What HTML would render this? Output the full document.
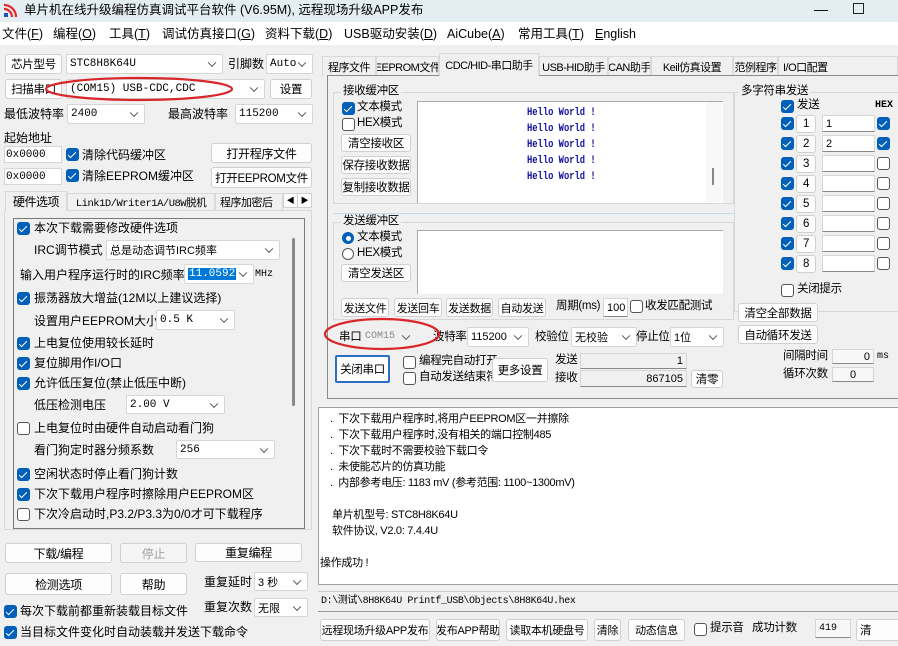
<!DOCTYPE html>
<html><head><meta charset="utf-8"><style>
*{box-sizing:border-box;margin:0;padding:0}
body{width:898px;height:646px;overflow:hidden;background:#f0f0f0;font-family:"Liberation Sans","Noto Sans CJK SC",sans-serif;font-size:12px;color:#000;position:relative}
.a{position:absolute;white-space:nowrap;line-height:1}
.btn{position:absolute;background:#fdfdfd;border:1px solid #d0d0d0;border-radius:3px;text-align:center;white-space:nowrap;display:flex;align-items:center;justify-content:center;font-size:11.5px;letter-spacing:-0.3px;overflow:hidden}
.cmb{position:absolute;background:#fff;border:1px solid #d6d6d6;border-radius:2px;padding-left:3px;display:flex;align-items:center;white-space:nowrap;font-family:"Liberation Mono","Noto Sans CJK SC",monospace;font-size:11px}
.cmb:after{content:"";position:absolute;right:7px;top:50%;width:5px;height:5px;border-right:1px solid #555;border-bottom:1px solid #555;transform:translateY(-70%) rotate(45deg)}
.inp{position:absolute;background:#fff;border:1px solid #d6d6d6;border-bottom:1px solid #888;display:flex;align-items:center;padding:0 3px;font-family:"Liberation Mono",monospace;font-size:11px}
.c{position:absolute;width:13px;height:13px;border-radius:3px;background:#005fb8}
.c:after{content:"";position:absolute;left:4px;top:1.5px;width:3px;height:7px;border-right:1.5px solid #fff;border-bottom:1.5px solid #fff;transform:rotate(45deg)}
.u{position:absolute;width:13px;height:13px;border-radius:3px;background:#fff;border:1px solid #555}
.mono{font-family:"Liberation Mono","Noto Sans CJK SC",monospace}
.white{position:absolute;background:#fff}
.tab{position:absolute;top:56px;height:20px;border:1px solid #d9d9d9;border-bottom:none;background:#f0f0f0;display:flex;align-items:center;justify-content:center;font-size:11px;letter-spacing:-0.5px;white-space:nowrap;overflow:hidden}
.grp{position:absolute;border:1px solid #c8d8e0}
.hw{position:absolute;left:527px;color:#1010a0;font-family:"Liberation Mono",monospace;font-size:11px;font-weight:bold;line-height:1;transform:scaleX(0.8);transform-origin:0 0;white-space:nowrap}
.log{position:absolute;font-size:11px;white-space:nowrap;letter-spacing:-0.3px}
.r{font-size:11.5px;letter-spacing:-0.3px}
.m{position:absolute;top:27px;font-size:12.5px;white-space:nowrap;line-height:15px;height:15px}
</style></head><body>
<div style="position:absolute;left:0;top:0;width:898px;height:22px;background:#e4eef2"></div>
<svg style="position:absolute;left:3px;top:3px" width="16" height="15"><rect x="1" y="10" width="4" height="4" fill="#1f4fbf"/><path d="M1 6a8 8 0 0 1 8 8M1 2a12 12 0 0 1 12 12" stroke="#e0282e" stroke-width="2.2" fill="none"/></svg>
<div class="a" style="left:24px;top:4px;font-size:12.5px">单片机在线升级编程仿真调试平台软件 (V6.95M), 远程现场升级APP发布</div>
<div class="a" style="left:814px;top:2px;font-size:14px">—</div>
<div style="position:absolute;left:853px;top:3px;width:11px;height:11px;border:1px solid #222"></div>
<div style="position:absolute;left:0;top:22px;width:898px;height:23px;background:#fff"></div>
<div class="m" style="left:2px">文件(<u>F</u>)</div>
<div class="m" style="left:53px">编程(<u>O</u>)</div>
<div class="m" style="left:109px">工具(<u>T</u>)</div>
<div class="m" style="left:162px">调试仿真接口(<u>G</u>)</div>
<div class="m" style="left:265px">资料下载(<u>D</u>)</div>
<div class="m" style="left:344px">USB驱动安装(<u>D</u>)</div>
<div class="m" style="left:447px">AiCube(<u>A</u>)</div>
<div class="m" style="left:518px">常用工具(<u>T</u>)</div>
<div class="m" style="left:595px"><u>E</u>nglish</div>

<div class="btn" style="left:5px;top:54px;width:57px;height:20px">芯片型号</div>
<div class="cmb" style="left:66px;top:54px;width:157px;height:20px">STC8H8K64U</div>
<div class="a" style="left:228px;top:58px">引脚数</div>
<div class="cmb" style="left:266px;top:54px;width:47px;height:20px">Auto</div>
<div class="btn" style="left:5px;top:79px;width:57px;height:20px">扫描串口</div>
<div class="cmb" style="left:66px;top:79px;width:199px;height:20px">(COM15) USB-CDC,CDC</div>
<div class="btn" style="left:270px;top:79px;width:42px;height:20px">设置</div>
<div class="a" style="left:4px;top:108px">最低波特率</div>
<div class="cmb" style="left:67px;top:104px;width:78px;height:20px">2400</div>
<div class="a" style="left:168px;top:108px">最高波特率</div>
<div class="cmb" style="left:235px;top:104px;width:78px;height:20px">115200</div>
<div class="a" style="left:4px;top:132px">起始地址</div>
<div class="inp" style="left:4px;top:146px;width:58px;height:17px;border-bottom-color:#d6d6d6;padding:0 1px">0x0000</div>
<div class="c" style="left:66px;top:148px"></div><div class="a" style="left:82px;top:149px">清除代码缓冲区</div>
<div class="btn" style="left:211px;top:143px;width:101px;height:20px;font-size:12px">打开程序文件</div>
<div class="inp" style="left:4px;top:168px;width:58px;height:17px;border-bottom-color:#d6d6d6;padding:0 1px">0x0000</div>
<div class="c" style="left:66px;top:169px"></div><div class="a" style="left:82px;top:170px">清除EEPROM缓冲区</div>
<div class="btn" style="left:211px;top:167px;width:101px;height:21px">打开EEPROM文件</div>
<div style="position:absolute;left:4px;top:210px;width:308px;height:320px;border:1px solid #d9d9d9;background:#f0f0f0"></div>
<div class="tab" style="left:5px;top:191px;width:62px;height:20px;font-size:12px">硬件选项</div>
<div class="tab" style="left:67px;top:193px;width:148px;height:17px;font-family:'Liberation Mono','Noto Sans CJK SC',monospace;font-size:10.5px">Link1D/Writer1A/U8W脱机</div>
<div class="tab" style="left:215px;top:193px;width:68px;height:17px;justify-content:flex-start;padding-left:4px">程序加密后</div>
<div class="btn" style="left:283px;top:193px;width:15px;height:15px;font-size:8px;border-radius:0">◀</div>
<div class="btn" style="left:297px;top:193px;width:15px;height:15px;font-size:8px;border-radius:0">▶</div>
<div style="position:absolute;left:13px;top:218px;width:292px;height:311px;border:1px solid #7a7a7a;background:#f0f0f0"></div>
<div style="position:absolute;left:292px;top:238px;width:3px;height:168px;background:#888;border-radius:2px"></div>
<div class="c" style="left:17px;top:222px"></div><div class="a" style="left:34px;top:222px">本次下载需要修改硬件选项</div>
<div class="a" style="left:34px;top:244px">IRC调节模式</div><div class="cmb" style="left:106px;top:240px;width:174px;height:20px;font-family:'Liberation Sans','Noto Sans CJK SC'">总是动态调节IRC频率</div>
<div class="a" style="left:20px;top:269px">输入用户程序运行时的IRC频率</div>
<div class="cmb" style="left:184px;top:264px;width:70px;height:20px"><span style="background:#0078d7;color:#fff;padding:0 1px">11.0592</span></div>
<div class="a mono" style="left:255px;top:270px;font-size:10px">MHz</div>
<div class="c" style="left:17px;top:292px"></div><div class="a" style="left:34px;top:292px">振荡器放大增益(12M以上建议选择)</div>
<div class="a" style="left:34px;top:315px">设置用户EEPROM大小</div><div class="cmb" style="left:156px;top:310px;width:79px;height:20px">0.5 K</div>
<div class="c" style="left:17px;top:337px"></div><div class="a" style="left:34px;top:337px">上电复位使用较长延时</div>
<div class="c" style="left:17px;top:357px"></div><div class="a" style="left:34px;top:357px">复位脚用作I/O口</div>
<div class="c" style="left:17px;top:377px"></div><div class="a" style="left:34px;top:377px">允许低压复位(禁止低压中断)</div>
<div class="a" style="left:34px;top:399px">低压检测电压</div><div class="cmb" style="left:126px;top:395px;width:99px;height:19px">2.00 V</div>
<div class="u" style="left:17px;top:422px"></div><div class="a" style="left:34px;top:422px">上电复位时由硬件自动启动看门狗</div>
<div class="a" style="left:34px;top:444px">看门狗定时器分频系数</div><div class="cmb" style="left:176px;top:440px;width:99px;height:19px">256</div>
<div class="c" style="left:17px;top:468px"></div><div class="a" style="left:34px;top:468px">空闲状态时停止看门狗计数</div>
<div class="c" style="left:17px;top:488px"></div><div class="a" style="left:34px;top:488px">下次下载用户程序时擦除用户EEPROM区</div>
<div class="u" style="left:17px;top:508px"></div><div class="a" style="left:34px;top:508px">下次冷启动时,P3.2/P3.3为0/0才可下载程序</div>
<div class="btn" style="left:5px;top:543px;width:107px;height:20px;font-size:12px">下载/编程</div>
<div class="btn" style="left:120px;top:543px;width:67px;height:20px;color:#a0a0a0;background:#f5f5f5;font-size:12px">停止</div>
<div class="btn" style="left:195px;top:543px;width:107px;height:19px;font-size:12px">重复编程</div>
<div class="btn" style="left:5px;top:573px;width:107px;height:22px;font-size:12px">检测选项</div>
<div class="btn" style="left:120px;top:573px;width:67px;height:22px;font-size:12px">帮助</div>
<div class="a" style="left:204px;top:576px">重复延时</div><div class="cmb" style="left:254px;top:572px;width:54px;height:19px;font-family:'Liberation Sans','Noto Sans CJK SC'">3 秒</div>
<div class="a" style="left:204px;top:601px">重复次数</div><div class="cmb" style="left:254px;top:598px;width:54px;height:19px;font-family:'Liberation Sans','Noto Sans CJK SC'">无限</div>
<div class="c" style="left:4px;top:605px"></div><div class="a" style="left:20px;top:605px">每次下载前都重新装载目标文件</div>
<div class="c" style="left:4px;top:626px"></div><div class="a" style="left:20px;top:626px">当目标文件变化时自动装载并发送下载命令</div>

<div class="tab" style="left:322px;width:54px">程序文件</div>
<div class="tab" style="left:376px;width:63px">EEPROM文件</div>
<div class="tab" style="left:539px;width:69px">USB-HID助手</div>
<div class="tab" style="left:608px;width:43px">CAN助手</div>
<div class="tab" style="left:651px;width:82px">Keil仿真设置</div>
<div class="tab" style="left:733px;width:45px">范例程序</div>
<div class="tab" style="left:778px;width:120px;justify-content:flex-start;padding-left:4px">I/O口配置</div>
<div style="position:absolute;left:327px;top:75px;width:571px;height:324px;border:1px solid #8a8a8a;border-right:none;background:#f0f0f0"></div>
<div class="tab" style="left:439px;top:53px;width:100px;height:23px;z-index:2">CDC/HID-串口助手</div>
<div class="grp" style="left:333px;top:92px;width:401px;height:112px;border-color:#d8d8d8"></div>
<div class="a r" style="left:341px;top:86px;background:#f0f0f0;padding:0 2px">接收缓冲区</div>
<div class="c" style="left:342px;top:102px"></div><div class="a r" style="left:357px;top:102px">文本模式</div>
<div class="u" style="left:342px;top:118px"></div><div class="a r" style="left:357px;top:118px">HEX模式</div>
<div class="btn" style="left:341px;top:134px;width:70px;height:18px">清空接收区</div>
<div class="btn" style="left:341px;top:156px;width:70px;height:18px">保存接收数据</div>
<div class="btn" style="left:341px;top:178px;width:70px;height:18px">复制接收数据</div>
<div class="white" style="left:417px;top:101px;width:306px;height:102px;border-top:1px solid #aaa;border-left:1px solid #aaa"></div>
<div style="position:absolute;left:706px;top:102px;width:16px;height:100px;background:#f8f8f8"></div>
<div style="position:absolute;left:712px;top:168px;width:2px;height:17px;background:#888"></div>
<div class="hw" style="top:108px">Hello World !</div>
<div class="hw" style="top:124px">Hello World !</div>
<div class="hw" style="top:140px">Hello World !</div>
<div class="hw" style="top:156px">Hello World !</div>
<div class="hw" style="top:172px">Hello World !</div>
<div style="position:absolute;left:333px;top:213px;width:401px;height:1px;background:#c5dbe6"></div>
<div class="grp" style="left:333px;top:222px;width:401px;height:98px;border-color:#d8d8d8"></div>
<div class="a r" style="left:341px;top:216px;background:#f0f0f0;padding:0 2px">发送缓冲区</div>
<div style="position:absolute;left:342px;top:232px;width:12px;height:12px;border-radius:50%;background:#005fb8"><div style="position:absolute;left:3.5px;top:3.5px;width:5px;height:5px;border-radius:50%;background:#fff"></div></div>
<div class="a r" style="left:357px;top:232px">文本模式</div>
<div style="position:absolute;left:342px;top:248px;width:12px;height:12px;border-radius:50%;border:1px solid #555;background:#fff"></div>
<div class="a r" style="left:357px;top:248px">HEX模式</div>
<div class="btn" style="left:341px;top:264px;width:70px;height:18px">清空发送区</div>
<div class="white" style="left:417px;top:230px;width:306px;height:64px;border-top:1px solid #aaa;border-left:1px solid #aaa"></div>
<div class="btn" style="left:341px;top:298px;width:48px;height:19px;font-size:11px">发送文件</div>
<div class="btn" style="left:394px;top:298px;width:48px;height:19px;font-size:11px">发送回车</div>
<div class="btn" style="left:446px;top:298px;width:47px;height:19px;font-size:11px">发送数据</div>
<div class="btn" style="left:498px;top:298px;width:48px;height:19px;font-size:11px">自动发送</div>
<div class="a r" style="left:556px;top:301px">周期(ms)</div>
<div class="inp" style="left:603px;top:298px;width:25px;height:19px;font-family:'Liberation Sans';padding:0 3px">100</div>
<div class="u" style="left:630px;top:300px"></div><div class="a r" style="left:645px;top:301px">收发匹配测试</div>
<div class="a r" style="left:339px;top:332px">串口</div>
<div class="cmb" style="left:362px;top:327px;width:54px;height:19px;border:none;background:#f0f0f0;color:#888;font-size:10px">COM15</div>
<div class="a r" style="left:433px;top:332px">波特率</div><div class="cmb" style="left:467px;top:327px;width:62px;height:20px;font-family:'Liberation Sans'">115200</div>
<div class="a r" style="left:535px;top:332px">校验位</div><div class="cmb" style="left:571px;top:327px;width:66px;height:20px;font-family:'Liberation Sans','Noto Sans CJK SC'">无校验</div>
<div class="a r" style="left:636px;top:332px">停止位</div><div class="cmb" style="left:670px;top:327px;width:54px;height:20px;font-family:'Liberation Sans','Noto Sans CJK SC'">1位</div>
<div class="btn" style="left:335px;top:355px;width:55px;height:28px;border:2px solid #2b6fc4;border-radius:2px">关闭串口</div>
<div class="u" style="left:403px;top:356px"></div><div class="a r" style="left:419px;top:356px">编程完自动打开</div>
<div class="u" style="left:403px;top:372px"></div><div class="a r" style="left:419px;top:372px">自动发送结束符</div>
<div class="btn" style="left:492px;top:358px;width:56px;height:24px">更多设置</div>
<div class="a r" style="left:555px;top:355px">发送</div>
<div class="inp" style="left:580px;top:353px;width:107px;height:16px;justify-content:flex-end;background:#f0f0f0;font-family:'Liberation Sans'">1</div>
<div class="a r" style="left:555px;top:373px">接收</div>
<div class="inp" style="left:580px;top:370px;width:107px;height:17px;justify-content:flex-end;background:#f0f0f0;font-family:'Liberation Sans'">867105</div>
<div class="btn" style="left:691px;top:370px;width:32px;height:18px">清零</div>
<div class="grp" style="left:734px;top:92px;width:164px;height:220px;border-color:#d8d8d8;border-right:none"></div>
<div class="a r" style="left:739px;top:86px;background:#f0f0f0;padding:0 2px">多字符串发送</div>
<div class="c" style="left:781px;top:100px"></div><div class="a r" style="left:797px;top:100px">发送</div>
<div class="a mono" style="left:875px;top:101px;font-size:10px;font-weight:bold">HEX</div>
<div class="c" style="left:781px;top:117px"></div><div class="btn" style="left:796px;top:115px;width:20px;height:18px">1</div><div class="inp" style="left:822px;top:115px;width:53px;height:17px;font-family:'Liberation Sans'">1</div><div class="c" style="left:877px;top:117px"></div>
<div class="c" style="left:781px;top:137px"></div><div class="btn" style="left:796px;top:135px;width:20px;height:18px">2</div><div class="inp" style="left:822px;top:135px;width:53px;height:17px;font-family:'Liberation Sans'">2</div><div class="c" style="left:877px;top:137px"></div>
<div class="c" style="left:781px;top:157px"></div><div class="btn" style="left:796px;top:155px;width:20px;height:18px">3</div><div class="inp" style="left:822px;top:155px;width:53px;height:17px"></div><div class="u" style="left:877px;top:157px"></div>
<div class="c" style="left:781px;top:177px"></div><div class="btn" style="left:796px;top:175px;width:20px;height:18px">4</div><div class="inp" style="left:822px;top:175px;width:53px;height:17px"></div><div class="u" style="left:877px;top:177px"></div>
<div class="c" style="left:781px;top:197px"></div><div class="btn" style="left:796px;top:195px;width:20px;height:18px">5</div><div class="inp" style="left:822px;top:195px;width:53px;height:17px"></div><div class="u" style="left:877px;top:197px"></div>
<div class="c" style="left:781px;top:217px"></div><div class="btn" style="left:796px;top:215px;width:20px;height:18px">6</div><div class="inp" style="left:822px;top:215px;width:53px;height:17px"></div><div class="u" style="left:877px;top:217px"></div>
<div class="c" style="left:781px;top:237px"></div><div class="btn" style="left:796px;top:235px;width:20px;height:18px">7</div><div class="inp" style="left:822px;top:235px;width:53px;height:17px"></div><div class="u" style="left:877px;top:237px"></div>
<div class="c" style="left:781px;top:257px"></div><div class="btn" style="left:796px;top:255px;width:20px;height:18px">8</div><div class="inp" style="left:822px;top:255px;width:53px;height:17px"></div><div class="u" style="left:877px;top:257px"></div>
<div class="u" style="left:781px;top:284px"></div><div class="a r" style="left:797px;top:284px">关闭提示</div>
<div class="btn" style="left:738px;top:303px;width:80px;height:19px">清空全部数据</div>
<div class="btn" style="left:738px;top:325px;width:80px;height:19px">自动循环发送</div>
<div class="a r" style="left:783px;top:351px">间隔时间</div><div class="inp" style="left:832px;top:349px;width:42px;height:15px;justify-content:flex-end;background:#f7f7f7;font-family:'Liberation Sans'">0</div>
<div class="a mono" style="left:877px;top:352px;font-size:10px">ms</div>
<div class="a r" style="left:783px;top:369px">循环次数</div><div class="inp" style="left:832px;top:367px;width:42px;height:15px;justify-content:center;background:#f7f7f7;font-family:'Liberation Sans'">0</div>
<svg style="position:absolute;left:0;top:0;z-index:5" width="898" height="646"><ellipse cx="139" cy="89" rx="93" ry="11" fill="none" stroke="#d8262b" stroke-width="2.2"/><ellipse cx="382" cy="334" rx="57" ry="15" fill="none" stroke="#d8262b" stroke-width="2.2"/></svg>
<div style="position:absolute;left:318px;top:407px;width:580px;height:178px;background:#fff;border:1px solid #a0a0a0;border-right:none"></div>
<div class="log" style="left:330px;top:410px">.&nbsp; 下次下载用户程序时,将用户EEPROM区一并擦除</div>
<div class="log" style="left:330px;top:426px">.&nbsp; 下次下载用户程序时,没有相关的端口控制485</div>
<div class="log" style="left:330px;top:442px">.&nbsp; 下次下载时不需要校验下载口令</div>
<div class="log" style="left:330px;top:458px">.&nbsp; 未使能芯片的仿真功能</div>
<div class="log" style="left:330px;top:474px">.&nbsp; 内部参考电压: 1183 mV (参考范围: 1100~1300mV)</div>
<div class="log" style="left:332px;top:506px">单片机型号: STC8H8K64U</div>
<div class="log" style="left:332px;top:522px">软件协议, V2.0: 7.4.4U</div>
<div class="log" style="left:320px;top:554px">操作成功 !</div>
<div style="position:absolute;left:318px;top:591px;width:580px;height:21px;background:#f0f0f0;border-top:1px solid #ccc;border-bottom:1px solid #999"></div>
<div class="a mono" style="left:321px;top:597px;font-size:10px;letter-spacing:-0.4px">D:\测试\8H8K64U Printf_USB\Objects\8H8K64U.hex</div>
<div class="btn" style="left:320px;top:619px;width:110px;height:22px;font-size:11px">远程现场升级APP发布</div>
<div class="btn" style="left:436px;top:619px;width:64px;height:22px;font-size:11px">发布APP帮助</div>
<div class="btn" style="left:506px;top:619px;width:82px;height:22px;font-size:11px">读取本机硬盘号</div>
<div class="btn" style="left:594px;top:619px;width:27px;height:22px;font-size:11px">清除</div>
<div class="btn" style="left:628px;top:619px;width:57px;height:22px;font-size:11px">动态信息</div>
<div class="u" style="left:694px;top:623px"></div><div class="a r" style="left:710px;top:623px">提示音</div>
<div class="a r" style="left:752px;top:623px">成功计数</div>
<div class="inp" style="left:815px;top:619px;width:36px;height:19px;background:#f7f7f7;font-size:10px">419</div>
<div class="btn" style="left:856px;top:619px;width:50px;height:22px;justify-content:flex-start;padding-left:3px">清</div>
</body></html>
